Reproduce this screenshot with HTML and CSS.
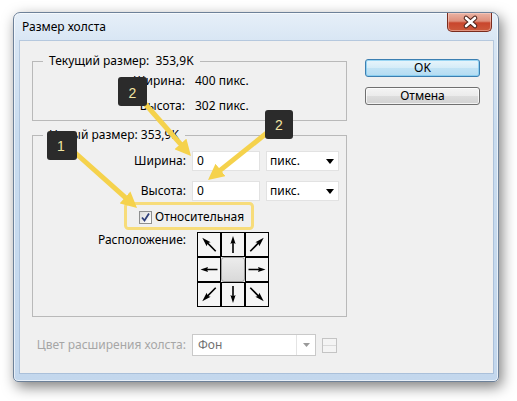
FILE: index.html
```html
<!DOCTYPE html>
<html lang="ru">
<head>
<meta charset="utf-8">
<title>Размер холста</title>
<link rel="stylesheet" href="styles.css">
</head>
<body>
<div class="desktop">
  <div class="window">
    <div class="titlebar">
      <span class="title">Размер холста</span>
      <div class="close">
        <svg width="45" height="19" viewBox="0 0 45 19">
          <path d="M18 5 L27 13 M27 5 L18 13" stroke="#4a2018" stroke-width="4.6" stroke-linecap="round"/>
          <path d="M18 5 L27 13 M27 5 L18 13" stroke="#ffffff" stroke-width="2.6" stroke-linecap="round"/>
        </svg>
      </div>
    </div>
    <div class="client">
      <div class="main">
        <fieldset class="group current">
          <legend>Текущий размер:&nbsp; 353,9K</legend>
          <div class="info">
            <span class="lbl">Ширина:</span><span class="val">400 пикс.</span>
            <span class="lbl">Высота:</span><span class="val">302 пикс.</span>
          </div>
        </fieldset>
        <fieldset class="group newsize">
          <legend>Новый размер: 353,9K</legend>
          <div class="form">
            <span class="lbl">Ширина:</span>
            <div class="field">0</div>
            <div class="select">пикс.<svg class="drop" width="8" height="5" viewBox="0 0 8 5"><path d="M0 0 H8 L4 5 Z" fill="#000"/></svg></div>
            <span class="lbl">Высота:</span>
            <div class="field">0</div>
            <div class="select">пикс.<svg class="drop" width="8" height="5" viewBox="0 0 8 5"><path d="M0 0 H8 L4 5 Z" fill="#000"/></svg></div>
          </div>
          <div class="relative">
            <span class="checkbox">
              <svg width="11" height="11" viewBox="0 0 11 11"><path d="M2 5.5 L4.5 8.5 L9 1.5" fill="none" stroke="#2f3f7a" stroke-width="1.8"/></svg>
            </span>
            <span>Относительная</span>
          </div>
          <div class="anchor-row">
            <span class="lbl">Расположение:</span>
            <div class="anchor">
              <div class="cell"><svg viewBox="0 0 22 23"><path transform="rotate(-45 11 11.5)" d="M11 2 L13.8 11 L11.8 10 L11.8 21 L10.2 21 L10.2 10 L8.2 11 Z"/></svg></div>
              <div class="cell"><svg viewBox="0 0 22 23"><path d="M11 3 L13.6 11 L11.8 10 L11.8 20 L10.2 20 L10.2 10 L8.4 11 Z"/></svg></div>
              <div class="cell"><svg viewBox="0 0 22 23"><path transform="rotate(45 11 11.5)" d="M11 2 L13.8 11 L11.8 10 L11.8 21 L10.2 21 L10.2 10 L8.2 11 Z"/></svg></div>
              <div class="cell"><svg viewBox="0 0 22 23"><path transform="rotate(-90 11 11.5)" d="M11 3 L13.4 10.5 L11.7 9.8 L11.7 20 L10.3 20 L10.3 9.8 L8.6 10.5 Z"/></svg></div>
              <div class="cell center"></div>
              <div class="cell"><svg viewBox="0 0 22 23"><path transform="rotate(90 11 11.5)" d="M11 3 L13.4 10.5 L11.7 9.8 L11.7 20 L10.3 20 L10.3 9.8 L8.6 10.5 Z"/></svg></div>
              <div class="cell"><svg viewBox="0 0 22 23"><path transform="rotate(-135 11 11.5)" d="M11 2 L13.8 11 L11.8 10 L11.8 21 L10.2 21 L10.2 10 L8.2 11 Z"/></svg></div>
              <div class="cell"><svg viewBox="0 0 22 23"><path transform="rotate(180 11 11.5)" d="M11 3 L13.6 11 L11.8 10 L11.8 20 L10.2 20 L10.2 10 L8.4 11 Z"/></svg></div>
              <div class="cell"><svg viewBox="0 0 22 23"><path transform="rotate(135 11 11.5)" d="M11 2 L13.8 11 L11.8 10 L11.8 21 L10.2 21 L10.2 10 L8.2 11 Z"/></svg></div>
            </div>
          </div>
        </fieldset>
        <div class="extend">
          <span class="lbl">Цвет расширения холста:</span>
          <div class="select disabled">
            <span>Фон</span>
            <span class="drop-part"><svg width="7" height="4" viewBox="0 0 7 4"><path d="M0 0 H7 L3.5 4 Z" fill="#9a9a9a"/></svg></span>
          </div>
          <div class="swatch"><span></span></div>
        </div>
      </div>
      <div class="buttons">
        <div class="btn default">OK</div>
        <div class="btn">Отмена</div>
      </div>
    </div>
  </div>
</div>
<svg class="annotations" width="517" height="401" viewBox="0 0 517 401">
  <defs>
    <marker id="head" viewBox="0 0 16 16" refX="5" refY="8" markerWidth="16" markerHeight="16" markerUnits="userSpaceOnUse" orient="auto">
      <path d="M0 0 L16 8 L0 16 Z" fill="#f5d24c"/>
    </marker>
  </defs>
  <rect x="125.5" y="203.5" width="127" height="25" rx="3" fill="none" stroke="#f7dc7a" stroke-width="3"/>
  <g stroke="#f5d24c" stroke-width="5" marker-end="url(#head)">
    <line x1="140" y1="98" x2="183.7" y2="147.7"/>
    <line x1="268" y1="132" x2="216.6" y2="173.1"/>
    <line x1="72" y1="150" x2="128.8" y2="200.7"/>
  </g>
  <g class="badge">
    <rect x="118" y="77" width="29" height="29" rx="3"/>
    <text x="132.5" y="98">2</text>
    <rect x="265" y="110" width="28" height="29" rx="3"/>
    <text x="279" y="130">2</text>
    <rect x="47" y="131" width="30" height="29" rx="3"/>
    <text x="61" y="151">1</text>
  </g>
</svg>
</body>
</html>
```
FILE: styles.css
```css
* { box-sizing: border-box; }
html, body { margin: 0; padding: 0; }
body {
  width: 517px;
  height: 401px;
  background: #ffffff;
  font-family: "Noto Sans", "Open Sans", sans-serif;
  font-size: 12px;
  line-height: 16px;
  color: #000;
  position: relative;
  overflow: hidden;
}
.desktop { padding: 12px 0 0 13px; }
.window {
  width: 486px;
  height: 370px;
  border: 1px solid #6d8199;
  border-radius: 7px 7px 5px 5px;
  background: linear-gradient(180deg, #e6eff8 0px, #d8e6f4 28px, #c9dcef 120px, #c3d7ed 100%);
  box-shadow: 3px 5px 14px rgba(0, 0, 0, 0.5), inset 0 0 0 1px rgba(255, 255, 255, 0.6);
  padding: 0 5px 8px 6px;
  display: flex;
  flex-direction: column;
}
.titlebar {
  height: 28px;
  display: flex;
  align-items: flex-start;
  flex: none;
}
.title { margin: 6px 0 0 2px; color: #000; }
.close {
  margin-left: auto;
  margin-right: 1px;
  width: 45px;
  height: 19px;
  border: 1px solid #7a2c1e;
  border-top: none;
  border-radius: 0 0 5px 5px;
  background: linear-gradient(180deg, #eab3a4 0%, #de8f7b 45%, #c9462d 55%, #cc5a3c 100%);
  box-shadow: inset 0 0 0 1px rgba(255, 220, 210, 0.45);
}
.close svg { display: block; }
.client {
  flex: 1;
  background: #f0f0f0;
  display: flex;
  padding: 12px 13px 0 12px;
  box-shadow: 0 0 0 1px rgba(140, 165, 195, 0.45);
}
.main { width: 315px; flex: none; }
.group {
  margin: 0;
  padding: 0;
  border: 1px solid #b9b9b9;
  min-width: 0;
}
.group legend {
  margin-left: 10px;
  padding: 0 6px;
  line-height: 16px;
}
.current { padding: 4px 0 6px 0; }
.info {
  display: grid;
  grid-template-columns: 152px auto;
  column-gap: 10px;
  row-gap: 9px;
}
.lbl { justify-self: end; white-space: nowrap; }
.newsize { margin-top: 6px; padding: 8px 0 9px 0; }
.form {
  display: grid;
  grid-template-columns: 153px 68px 73px;
  grid-auto-rows: 20px;
  column-gap: 6px;
  row-gap: 10px;
  align-items: center;
}
.field {
  height: 20px;
  background: #fff;
  border: 1px solid #e2e2e2;
  padding: 1px 0 0 4px;
}
.select {
  height: 20px;
  background: #fff;
  border: 1px solid #e2e2e2;
  padding: 1px 0 0 3px;
  display: flex;
  align-items: flex-start;
}
.select .drop { margin: 6px 4px 0 auto; }
.relative {
  margin-top: 8px;
  padding-left: 106px;
  display: flex;
  align-items: center;
  height: 16px;
}
.checkbox {
  width: 13px;
  height: 13px;
  border: 1px solid #8e8f8f;
  background: linear-gradient(135deg, #dcdcdc, #ffffff);
  margin-right: 3px;
  display: flex;
  align-items: center;
  justify-content: center;
}
.checkbox svg { display: block; }
.anchor-row {
  margin-top: 7px;
  display: grid;
  grid-template-columns: 153px auto;
  column-gap: 11px;
  align-items: start;
}
.anchor {
  display: grid;
  grid-template-columns: repeat(3, 24px);
  grid-template-rows: repeat(3, 25px);
  width: 72px;
}
.cell {
  border: 1px solid #000;
  background: #f5f5f5;
}
.cell svg { display: block; width: 22px; height: 23px; fill: #000; }
.cell.center {
  border: 1px solid #9c9c9c;
  border-radius: 3px;
  background: linear-gradient(180deg, #ececec, #d9d9d9);
}
.extend {
  margin-top: 17px;
  display: grid;
  grid-template-columns: 154px 124px 15px;
  column-gap: 6px;
  align-items: center;
  height: 22px;
}
.extend .lbl { color: #a6a6a6; }
.select.disabled {
  height: 22px;
  border: 1px solid #c9c9c9;
  padding: 0;
  align-items: stretch;
  color: #6f6f6f;
}
.select.disabled span:first-child { padding: 2px 0 0 5px; flex: 1; }
.drop-part {
  width: 19px;
  border-left: 1px solid #e4e4e4;
  display: flex;
  align-items: center;
  justify-content: center;
}
.swatch {
  width: 15px;
  height: 15px;
  border: 1px solid #c4c4c4;
  background: #f4f4f4;
  display: flex;
  align-items: center;
}
.swatch span { display: block; width: 100%; height: 1px; background: #dadada; }
.buttons {
  margin-left: 18px;
  padding-top: 6px;
  display: flex;
  flex-direction: column;
  gap: 10px;
}
.btn {
  width: 115px;
  height: 18px;
  border: 1px solid #707070;
  border-radius: 3px;
  background: linear-gradient(180deg, #f4f4f4 0%, #ebebeb 50%, #dddddd 51%, #d2d2d2 100%);
  text-align: center;
  line-height: 16px;
  box-shadow: inset 0 0 0 1px rgba(255, 255, 255, 0.7);
}
.btn.default {
  border-color: #3c7fb1;
  background: linear-gradient(180deg, #e8f5fc 0%, #d5ecf8 50%, #c2e3f5 51%, #b4dcf2 100%);
  box-shadow: inset 0 0 0 1px rgba(120, 200, 240, 0.7);
}
.annotations {
  position: absolute;
  left: 0;
  top: 0;
  pointer-events: none;
}
.badge rect { fill: #2b2b2b; }
.badge text {
  fill: #f2e5a4;
  font-family: "Liberation Sans", sans-serif;
  font-size: 14px;
  text-anchor: middle;
}
```
